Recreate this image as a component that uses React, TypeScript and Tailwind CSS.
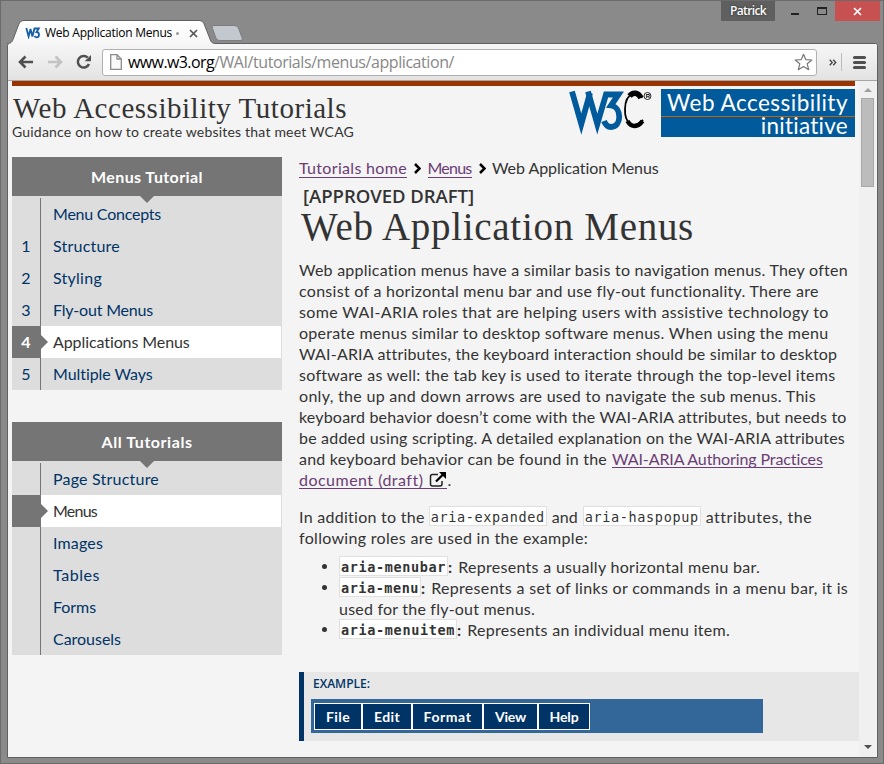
import { useLayoutEffect, useRef, type ReactNode } from "react";

/** Text set to a given measure by adjusting its tracking. */
function Fit({ w, className = "", children }: { w: number; className?: string; children: string }) {
  const ref = useRef<HTMLSpanElement>(null);
  useLayoutEffect(() => {
    const el = ref.current;
    if (!el) return;
    el.style.letterSpacing = "0px";
    const natural = el.getBoundingClientRect().width;
    el.style.letterSpacing = `${(w - natural) / Math.max(1, children.length)}px`;
  }, [w, children]);
  return (
    <span ref={ref} className={`inline-block shrink-0 whitespace-pre ${className}`}>
      {children}
    </span>
  );
}

function Tab() {
  return (
    <svg className="block shrink-0" width="240" height="25" viewBox="7 19 240 25">
      <defs>
        <linearGradient id="tab" x1="0" y1="0" x2="0" y2="1">
          <stop offset="0" stopColor="#ffffff" />
          <stop offset="1" stopColor="#f6f6f6" />
        </linearGradient>
      </defs>
      <path d="M7 43.5 C11 43.5 12 42 13 39.500 L18.500 25 C19.500 22 21 20.500 24 20.500 H199 C202 20.500 203.500 22 204.500 25 L210 39 C211 42.500 212.500 43.500 216 43.500 V46 H7Z" fill="url(#tab)" stroke="#606060" />
      <path d="M214 25.500 H234 C237 25.500 238 27 239 29.500 L242 37.500 C243 39.500 242 40.500 240 40.500 H220 C217.500 40.500 216.500 39 215.500 37 L212.500 28.500 C212 26.500 212.500 25.500 214 25.500Z" fill="#c3c8ce" stroke="#7a7c7e" />
    </svg>
  );
}

function TitleBar() {
  return (
    <div className="flex h-[42px] items-start justify-between pl-[6px] pr-[3px]">
      <div className="relative mt-[18px] h-[24px] w-[240px]">
        <Tab />
        <div className="absolute left-[18px] top-[4px] flex h-[20px] items-center">
          <svg width="16" height="12" viewBox="0 0 16 12">
            <path d="M1.300 1 L3.600 9.500 L5.500 2 L7.400 9.500 L9.500 1.500 H13.800 L11.500 5 C15 5.300 14.600 10.300 11.800 10.300 C10.800 10.300 10 9.800 9.500 9" fill="none" stroke="#1560a8" strokeWidth="1.800" />
          </svg>
          <Fit w={127} className="ml-[4px] font-['Open_Sans',sans-serif] text-[12px] leading-[20px] text-black">Web Application Menus</Fit>
          <span className="ml-[4px] h-[3px] w-[3px] rounded-full bg-[#999]" />
          <svg className="ml-[10px]" width="9" height="9" viewBox="0 0 9 9">
            <path d="M1 1 L8 8 M8 1 L1 8" stroke="#555" strokeWidth="1.700" />
          </svg>
        </div>
      </div>
      <div className="flex items-center">
        <div className="flex h-[20px] w-[54px] items-center justify-center bg-[#5f5f5f]">
          <Fit w={36} className="font-['Open_Sans',sans-serif] text-[12px] font-semibold leading-[20px] text-white [text-shadow:0_0_2px_#222]">Patrick</Fit>
        </div>
        <span className="ml-[16px] mt-[5px] h-[2px] w-[8px] bg-[#222]" />
        <span className="ml-[18px] h-[8px] w-[10px] border border-t-2 border-[#222]" />
        <div className="ml-[8px] flex h-[20px] w-[45px] items-center justify-center bg-[#c75050]">
          <svg width="9" height="9" viewBox="0 0 9 9">
            <path d="M1 1 L8 8 M8 1 L1 8" stroke="white" strokeWidth="1.700" />
          </svg>
        </div>
      </div>
    </div>
  );
}

function Toolbar() {
  return (
    <div className="flex h-[37px] items-center border-b border-[#a6a6a6] bg-linear-to-b from-[#f6f6f6] to-[#e3e3e3]">
      <svg className="ml-[10px] shrink-0" width="16" height="14" viewBox="0 0 16 14">
        <path d="M15 7 H2 M7.500 1.500 L2 7 L7.500 12.500" fill="none" stroke="#505050" strokeWidth="2.600" />
      </svg>
      <svg className="ml-[13px] shrink-0" width="16" height="14" viewBox="0 0 16 14">
        <path d="M1 7 H14 M8.500 1.500 L14 7 L8.500 12.500" fill="none" stroke="#c3c3c3" strokeWidth="2.600" />
      </svg>
      <svg className="ml-[13px] shrink-0" width="16" height="16" viewBox="0 0 16 16">
        <path d="M13 10 A5.800 5.800 0 1 1 11.800 3.700" fill="none" stroke="#505050" strokeWidth="2.500" />
        <path d="M15 1 V7.300 H8.700Z" fill="#505050" />
      </svg>
      <div className="ml-[10px] flex h-[27px] w-[715px] shrink-0 items-center rounded-[3px] border border-[#b0b0b0] bg-white">
        <svg className="ml-[7px]" width="12" height="16" viewBox="0 0 12 16">
          <path d="M.7 .7 H7 L11.300 5 V15.300 H.7Z M7 .7 V5 H11.300" fill="#fafafa" stroke="#8c8c8c" strokeWidth="1.300" />
        </svg>
        <Fit w={86} className="ml-[6px] font-['Open_Sans',sans-serif] text-[16px] leading-[24px] text-black">www.w3.org</Fit>
        <Fit w={240} className="font-['Open_Sans',sans-serif] text-[16px] leading-[24px] text-[#888]">/WAI/tutorials/menus/application/</Fit>
        <svg className="ml-auto mr-[3px]" width="19" height="18" viewBox="0 0 19 18">
          <path d="M9.500 1.300 L11.700 6.600 L17.800 7 L13.200 10.800 L14.700 16.700 L9.500 13.500 L4.300 16.700 L5.800 10.800 L1.200 7 L7.300 6.600Z" fill="white" stroke="#777" strokeWidth="1.200" strokeLinejoin="round" />
        </svg>
      </div>
      <svg className="ml-[12px] shrink-0" width="8" height="7" viewBox="0 0 8 7">
        <path d="M.7 .7 L3.300 3.500 L.7 6.300 M4.200 .7 L6.800 3.500 L4.200 6.300" fill="none" stroke="#444" strokeWidth="1.300" />
      </svg>
      <span className="ml-[4px] h-[18px] w-px bg-[#bbb]" />
      <div className="ml-[11px] flex w-[13px] flex-col gap-[2px]">
        <span className="h-[3px] rounded-sm bg-[#505050]" />
        <span className="h-[3px] rounded-sm bg-[#505050]" />
        <span className="h-[3px] rounded-sm bg-[#505050]" />
      </div>
    </div>
  );
}

function Logo() {
  return (
    <div className="flex">
      <svg width="83" height="48" viewBox="0 1 83 48">
        <g fill="none" stroke="#005a9c" strokeWidth="5.800">
          <path d="M3 3.500 L12.300 36 L21 5" />
          <path d="M19 3.500 L28.300 36 L37 6.500 H49.500 L42 17.500 C53 19 53 39 42 39 C38.500 39 36.500 37 35 33" />
        </g>
        <g fill="none" stroke="black">
          <path d="M73 10 C70 2 56.500 3 56 21 C55.500 35 64 42 74 32" strokeWidth="1.800" />
          <path d="M72 10 C69.500 4.500 64 3.500 60.500 8" strokeWidth="5.500" />
          <path d="M58.500 33 C62.500 40 69 39.500 73.500 33" strokeWidth="4.500" />
          <circle cx="78.500" cy="8" r="3.500" strokeWidth=".8" />
        </g>
        <text x="76.700" y="10.300" fontFamily="Liberation Sans, sans-serif" fontSize="6" fontWeight="bold">R</text>
      </svg>
      <div className="ml-[9px] h-[48px] w-[194px] bg-[#005a9c] text-right font-['Lato',sans-serif] text-[22.5px] text-white">
        <div className="h-[27px] pr-[7px] leading-[28px]">
          <Fit w={181}>Web Accessibility</Fit>
        </div>
        <div className="h-px bg-[#c46200]" />
        <div className="h-[20px] pr-[7px] leading-[18px]">
          <Fit w={88}>initiative</Fit>
        </div>
      </div>
    </div>
  );
}

type Item = { label: string; w: number; n?: string; current?: boolean };

function SideNav({ title, w, items }: { title: string; w: number; items: Item[] }) {
  return (
    <nav className="w-[270px] bg-[#dddddd]">
      <div className="relative h-[39px] bg-[#757575] text-center font-bold leading-[39px] text-white">
        <Fit w={w}>{title}</Fit>
        <span className="absolute left-[128px] top-[39px] border-x-[7px] border-t-[7px] border-x-transparent border-t-[#757575]" />
      </div>
      <ul className="pt-[2px]">
        {items.map((it) => (
          <li key={it.label} className="flex h-[32px] pr-px leading-[31px] text-[#003366]">
            <span className={it.current ? "w-[29px] bg-[#757575] pr-px text-center font-bold text-white" : "w-[29px] border-r border-[#757575] text-center"}>
              {it.n}
            </span>
            <span className={it.current ? "relative flex-1 bg-white pl-[12px] text-[#333]" : "flex-1 pl-[12px]"}>
              {it.current && (
                <span className="absolute left-0 top-[9px] border-y-[7px] border-l-[7px] border-y-transparent border-l-[#757575]" />
              )}
              <Fit w={it.w}>{it.label}</Fit>
            </span>
          </li>
        ))}
      </ul>
    </nav>
  );
}

const MENU_ITEMS: Item[] = [
  { label: "Menu Concepts", w: 108 },
  { label: "Structure", w: 67, n: "1" },
  { label: "Styling", w: 49, n: "2" },
  { label: "Fly-out Menus", w: 100, n: "3" },
  { label: "Applications Menus", w: 137, n: "4", current: true },
  { label: "Multiple Ways", w: 100, n: "5" },
];

const ALL_ITEMS: Item[] = [
  { label: "Page Structure", w: 106 },
  { label: "Menus", w: 44, current: true },
  { label: "Images", w: 50 },
  { label: "Tables", w: 47 },
  { label: "Forms", w: 43 },
  { label: "Carousels", w: 68 },
];

const INTRO: [string, number][] = [
  ["Web application menus have a similar basis to navigation menus. They often", 549],
  ["consist of a horizontal menu bar and use fly-out functionality. There are", 520],
  ["some WAI-ARIA roles that are helping users with assistive technology to", 530],
  ["operate menus similar to desktop software menus. When using the menu", 529],
  ["WAI-ARIA attributes, the keyboard interaction should be similar to desktop", 538],
  ["software as well: the tab key is used to iterate through the top-level items", 536],
  ["only, the up and down arrows are used to navigate the sub menus. This", 517],
  ["keyboard behavior doesn’t come with the WAI-ARIA attributes, but needs to", 547],
  ["be added using scripting. A detailed explanation on the WAI-ARIA attributes", 546],
];

function Chevron() {
  return (
    <svg className="ml-[7px] mr-[6.5px] mt-[6px] shrink-0" width="7" height="11" viewBox="0 0 7 11">
      <path d="M1 1 L5.500 5.500 L1 10" fill="none" stroke="black" strokeWidth="2.500" />
    </svg>
  );
}

function Code({ w, bold = false, children }: { w: number; bold?: boolean; children: string }) {
  return (
    <code
      className={
        bold
          ? "h-[20px] shrink-0 border border-[#e0e0e0] bg-white px-px font-['DejaVu_Sans_Mono',monospace] text-[13.5px] font-bold leading-[20px]"
          : "h-[20px] shrink-0 border border-[#e0e0e0] bg-white px-px font-['DejaVu_Sans_Mono',monospace] text-[13.5px] leading-[20px]"
      }
    >
      <Fit w={w}>{children}</Fit>
    </code>
  );
}

function Line({ children }: { children: ReactNode }) {
  return <div className="flex h-[21px] leading-[21px]">{children}</div>;
}

function Bullet() {
  return <span className="-ml-[17px] mr-[12px] mt-[8px] h-[5px] w-[5px] shrink-0 rounded-full bg-[#333]" />;
}

function Article() {
  return (
    <main className="w-[560px]">
      <div className="flex h-[21px] leading-[21px]">
        <Fit w={108} className="border-b border-[#6b3d75] text-[#6b3d75]">Tutorials home</Fit>
        <Chevron />
        <Fit w={44} className="border-b border-[#6b3d75] text-[#6b3d75]">Menus</Fit>
        <Chevron />
        <Fit w={167}>Web Application Menus</Fit>
      </div>
      <h1 className="mt-[7px]">
        <span className="block h-[24px] pl-[4px] text-[18.5px] font-semibold leading-[22px]">
          <Fit w={171} className="font-['Open_Sans',sans-serif]">[APPROVED DRAFT]</Fit>
        </span>
        <span className="block h-[38px] pl-[2px] font-['Liberation_Serif',serif] text-[39px] leading-[35px]">
          <Fit w={393}>Web Application Menus</Fit>
        </span>
      </h1>
      <div className="mt-[12px]">
        {INTRO.map(([text, w]) => (
          <Line key={text}><Fit w={w}>{text}</Fit></Line>
        ))}
        <Line>
          <Fit w={308}>and keyboard behavior can be found in the</Fit>
          <Fit w={211} className="ml-[5px] h-[20px] border-b border-[#6b3d75] text-[#6b3d75]">WAI-ARIA Authoring Practices</Fit>
        </Line>
        <Line>
          <span className="flex h-[20px] border-b border-[#6b3d75] text-[#6b3d75]">
            <Fit w={124}>document (draft)</Fit>
            <svg className="ml-[6px] mt-[2px]" width="18" height="17" viewBox="0 0 18 17">
              <path d="M9 3.500 H3.500 Q1.500 3.500 1.500 5.500 V13 Q1.500 15 3.500 15 H11 Q13 15 13 13 V10" fill="none" stroke="#222" strokeWidth="1.500" />
              <path d="M7 10.500 L14 3.500" stroke="black" strokeWidth="2.300" />
              <path d="M10 1 H17 V8Z" fill="black" />
            </svg>
          </span>
          <span>.</span>
        </Line>
      </div>
      <div className="mt-[16px]">
        <Line>
          <Fit w={126}>In addition to the</Fit>
          <span className="ml-[4px] flex"><Code w={114}>aria-expanded</Code></span>
          <Fit w={26} className="ml-[5px]">and</Fit>
          <span className="ml-[5px] flex"><Code w={114}>aria-haspopup</Code></span>
          <Fit w={106} className="ml-[5px]">attributes, the</Fit>
        </Line>
        <Line><Fit w={289}>following roles are used in the example:</Fit></Line>
      </div>
      <ul className="mt-[8px] pl-[40px]">
        <li className="flex h-[21px] leading-[21px]">
          <Bullet />
          <Code w={105} bold>aria-menubar</Code>
          <b>:</b>
          <Fit w={302} className="ml-[6px]">Represents a usually horizontal menu bar.</Fit>
        </li>
        <li className="h-[42px] leading-[21px]">
          <div className="flex h-[21px]">
            <Bullet />
            <Code w={78} bold>aria-menu</Code>
            <b>:</b>
            <Fit w={417} className="ml-[6px]">Represents a set of links or commands in a menu bar, it is</Fit>
          </div>
          <Fit w={196}>used for the fly-out menus.</Fit>
        </li>
        <li className="flex h-[21px] leading-[21px]">
          <Bullet />
          <Code w={114} bold>aria-menuitem</Code>
          <b>:</b>
          <Fit w={263} className="ml-[6px]">Represents an individual menu item.</Fit>
        </li>
      </ul>
      <section className="mt-[32px] h-[69px] border-l-[5px] border-[#003366] bg-[#e7e7e7] pl-[7px]">
        <div className="h-[27px] pl-[2px] text-[12px] leading-[24px] text-[#003366]">
          <Fit w={57} className="font-['Open_Sans',sans-serif] font-semibold">EXAMPLE:</Fit>
        </div>
        <div className="flex h-[34px] w-[452px] bg-[#336699] pl-[3px] pt-[4px] text-[14px] font-bold leading-[25px] text-white">
          <div className="h-[27px] w-[48px] border border-white bg-[#003366] text-center"><Fit w={24}>File</Fit></div>
          <div className="h-[27px] w-[50px] border border-white bg-[#003366] text-center"><Fit w={26}>Edit</Fit></div>
          <div className="h-[27px] w-[71px] border border-white bg-[#003366] text-center"><Fit w={48}>Format</Fit></div>
          <div className="h-[27px] w-[55px] border border-white bg-[#003366] text-center"><Fit w={31}>View</Fit></div>
          <div className="h-[27px] w-[52px] border border-white bg-[#003366] text-center"><Fit w={29}>Help</Fit></div>
        </div>
      </section>
    </main>
  );
}

function ScrollBar() {
  return (
    <div className="flex w-[17px] shrink-0 flex-col items-center bg-[#f0f0f0]">
      <span className="mt-[7px] border-x-[4px] border-b-[4px] border-x-transparent border-b-[#a0a0a0]" />
      <span className="mt-[6px] h-[89px] w-[13px] border border-[#a8a8a8] bg-[#bcbcbc]" />
      <span className="mb-[8px] mt-auto border-x-[4px] border-t-[4px] border-x-transparent border-t-[#505050]" />
    </div>
  );
}

export default function App() {
  return (
    <div className="h-[764px] w-[884px] overflow-hidden border border-[#6b6b6b] bg-[#8a8a8a]">
      <TitleBar />
      <div className="ml-[6px] h-[715px] w-[871px] overflow-hidden rounded-t-[3px] border border-[#606060] bg-[#f4f4f4]">
        <Toolbar />
        <div className="flex h-[676px]">
          <div className="w-[851px] shrink-0 pl-[4px] font-['Lato',sans-serif] text-[16px] text-[#333]">
            <div className="h-[5px] w-[843px] bg-[#993300]" />
            <header className="flex h-[71px] w-[843px] justify-between pt-[3px]">
              <div className="pt-[3px]">
                <div className="h-[32px] pl-px font-['Liberation_Serif',serif] text-[29px] leading-[32px]">
                  <Fit w={334}>Web Accessibility Tutorials</Fit>
                </div>
                <div className="text-[14px] leading-[16px]">
                  <Fit w={342}>Guidance on how to create websites that meet WCAG</Fit>
                </div>
              </div>
              <Logo />
            </header>
            <div className="flex gap-[17px]">
              <div className="flex flex-col gap-[32px]">
                <SideNav title="Menus Tutorial" w={112} items={MENU_ITEMS} />
                <SideNav title="All Tutorials" w={91} items={ALL_ITEMS} />
              </div>
              <Article />
            </div>
          </div>
          <ScrollBar />
        </div>
      </div>
    </div>
  );
}
